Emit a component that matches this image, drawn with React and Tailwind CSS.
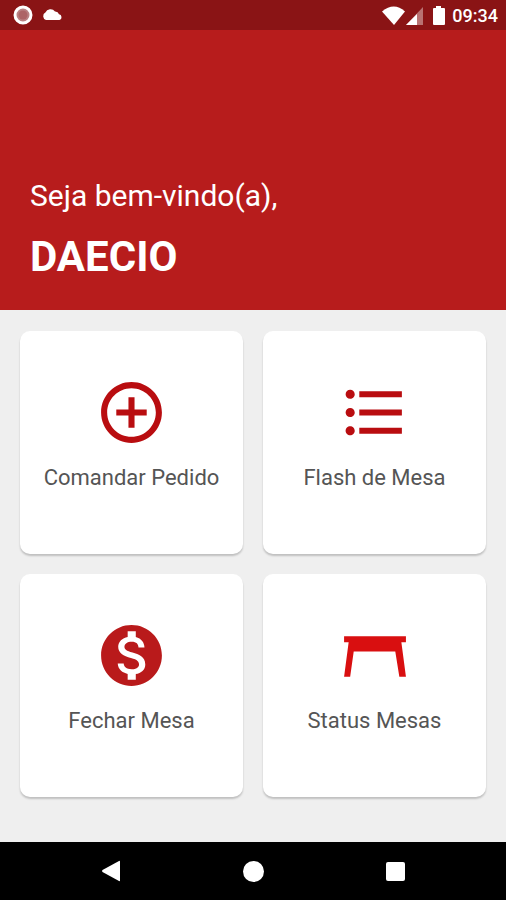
import React from 'react';
import { MdAddCircleOutline, MdFormatListBulleted, MdMonetizationOn } from 'react-icons/md';

function TableIcon({ className }) {
  return (
    <svg className={className} viewBox="0 0 72 72" fill="currentColor" aria-hidden="true">
      <path d="M6 17H67V23H62.5L67 57H60.5L56.5 32H15.5L12 57H6L10.5 23H6Z" />
    </svg>
  );
}

const menu = [
  { label: 'Comandar Pedido', icon: MdAddCircleOutline, color: 'text-[#b90d10]' },
  { label: 'Flash de Mesa', icon: MdFormatListBulleted, color: 'text-[#b90d10]' },
  { label: 'Fechar Mesa', icon: MdMonetizationOn, color: 'text-[#b91a1b]' },
  { label: 'Status Mesas', icon: TableIcon, color: 'text-[#d90f10]' },
];

function StatusBar() {
  return (
    <div className="flex h-[30px] items-center justify-between bg-[#8a1415] pl-3 pr-2 text-white">
      <div className="flex items-center gap-2">
        <svg className="size-[22px]" viewBox="0 0 22 22" aria-hidden="true">
          <circle cx="11" cy="11" r="8" fill="#b98082" stroke="white" strokeWidth="3" />
          <circle cx="11" cy="11" r="4.5" fill="#ad6466" />
        </svg>
        <svg className="h-[22px] w-5" viewBox="0 0 20 22" fill="currentColor" aria-hidden="true">
          <path d="M4 16a4 4 0 0 1-.6-7.4A5.500 5.500 0 0 1 13 7.500 4 4 0 0 1 17 10.200 3 3 0 0 1 17.500 16Z" />
        </svg>
      </div>
      <div className="flex items-center pt-0.5">
        <svg className="h-[22px] w-6" viewBox="0 0 24 22" fill="currentColor" aria-hidden="true">
          <path d="M0 6.500Q12-3.500 23 6.500L12 20Z" />
        </svg>
        <svg className="h-[22px] w-[18px]" viewBox="0 0 18 22" fill="currentColor" aria-hidden="true">
          <path d="M17 2V20H0Z" opacity="0.4" />
          <path d="M11 9V20H0Z" />
        </svg>
        <svg className="ml-2 h-[22px] w-4" viewBox="0 0 16 22" fill="currentColor" aria-hidden="true">
          <path d="M4 1h5v2h3a1 1 0 0 1 1 1v15a1 1 0 0 1-1 1H2a1 1 0 0 1-1-1V4a1 1 0 0 1 1-1h2Z" />
        </svg>
        <span className="ml-1 text-lg font-medium leading-6">09:34</span>
      </div>
    </div>
  );
}

function MenuCard({ label, icon: Icon, color }) {
  return (
    <button
      type="button"
      className="flex aspect-square flex-col items-center rounded-[10px] bg-white pt-[45px] shadow-[0_2px_2px_rgba(0,0,0,0.2)]"
    >
      <Icon className={`size-[73px] ${color}`} />
      <span className="mt-3 text-[22px] leading-[34px] text-[#555555]">{label}</span>
    </button>
  );
}

function NavBar() {
  return (
    <nav className="flex h-[58px] items-center justify-center gap-[110px] bg-black text-white">
      <button type="button" aria-label="Voltar" className="flex size-8 items-center justify-center">
        <svg className="size-6" viewBox="0 0 24 24" fill="currentColor" aria-hidden="true">
          <path d="M21 2.500V21.500Q21 22.500 20 22L3.500 13Q2.500 12 3.500 11L20 2Q21 1.500 21 2.500Z" />
        </svg>
      </button>
      <button type="button" aria-label="Início" className="flex size-8 items-center justify-center">
        <span className="size-[21px] rounded-full bg-white" />
      </button>
      <button type="button" aria-label="Recentes" className="flex size-8 items-center justify-center">
        <span className="size-[19px] rounded-xs bg-white" />
      </button>
    </nav>
  );
}

export default function App() {
  return (
    <div className="flex min-h-screen flex-col bg-[#efefef] font-['Roboto',sans-serif]">
      <StatusBar />
      <header className="flex h-[280px] flex-col justify-end bg-[#b71c1c] px-[30px] pb-7 text-white">
        <p className="text-[30px] leading-10">Seja bem-vindo(a),</p>
        <h1 className="mt-4 text-[42px] font-bold leading-[50px]">DAECIO</h1>
      </header>
      <main className="grid flex-1 grid-cols-2 content-start gap-5 px-5 pb-5 pt-[21px]">
        {menu.map((item) => (
          <MenuCard key={item.label} {...item} />
        ))}
      </main>
      <NavBar />
    </div>
  );
}
